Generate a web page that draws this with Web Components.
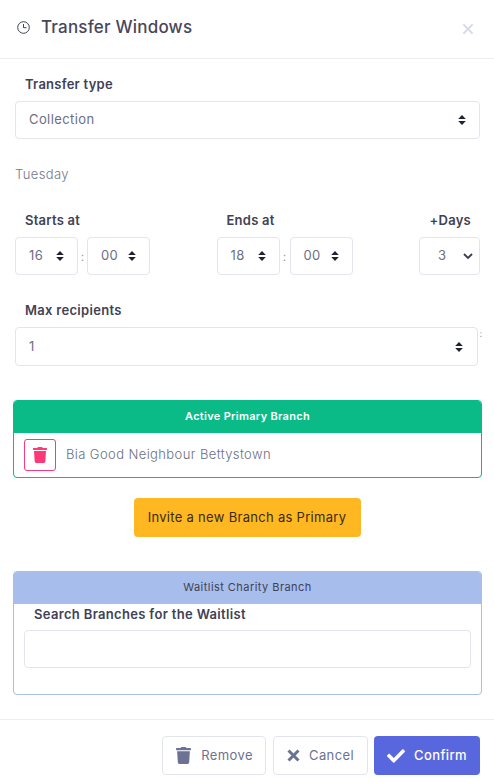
<!DOCTYPE html>
<html>
<head>
<meta charset="utf-8">
<style>
html, body { margin: 0; height: 782px; overflow: hidden; background: #fff; }
body { font-family: Inter, "Liberation Sans", sans-serif; font-size: 13px; color: #6b6f82; }
</style>
</head>
<body>
<transfer-dialog></transfer-dialog>

<script>
const ICONS = {
    trash: '<svg viewBox="0 0 448 512"><path fill="currentColor" d="M432 32H312l-9.4-18.7A24 24 0 0 0 281.1 0H166.8a23.72 23.72 0 0 0-21.4 13.3L136 32H16A16 16 0 0 0 0 48v32a16 16 0 0 0 16 16h416a16 16 0 0 0 16-16V48a16 16 0 0 0-16-16zM53.2 467a48 48 0 0 0 47.9 45h245.8a48 48 0 0 0 47.9-45L416 128H32z"/></svg>',
    check: '<svg viewBox="0 0 512 512"><path fill="currentColor" d="M173.898 439.404l-166.4-166.4c-9.997-9.997-9.997-26.206 0-36.204l36.203-36.204c9.997-9.998 26.207-9.998 36.204 0L192 312.69 432.095 72.596c9.997-9.997 26.207-9.997 36.204 0l36.203 36.204c9.997 9.997 9.997 26.206 0 36.204l-294.4 294.401c-9.998 9.997-26.207 9.997-36.204-.001z"/></svg>',
    times: '<svg viewBox="0 0 12 12"><path fill="none" stroke="currentColor" stroke-width="2.8" d="M1.4 1.4l9.2 9.2M10.6 1.4l-9.2 9.2"/></svg>',
    updown: '<svg viewBox="0 0 8 10"><path fill="#1f2233" d="M4 0l3.8 4H.2zM4 10L.2 6h7.6z"/></svg>',
    chevron: '<svg viewBox="0 0 10 7"><path fill="none" stroke="#3a3d4d" stroke-width="1.9" d="M1 1l4 4 4-4"/></svg>'
};

class FieldLabel extends HTMLElement {
    constructor() {
        super();
        this.attachShadow({mode: 'open'}).innerHTML = `
            <style>
                :host { display: block; font-size: 13px; line-height: 18px; font-weight: 600; color: #3f4254; letter-spacing: var(--label-spacing, .25px); }
            </style>
            <slot></slot>`;
    }
}

class SelectBox extends HTMLElement {
    constructor() {
        super();
        let shadow = this.attachShadow({mode: 'open'});
        let chevron = this.hasAttribute('data-chevron');
        shadow.innerHTML = `
            <style>
                :host {
                    display: flex; align-items: center; justify-content: space-between;
                    box-sizing: border-box; height: 38px;
                    padding: 0 var(--pad-right, 13px) 0 var(--pad-left, 13px);
                    border: 1px solid #e2e5ec; border-radius: 4px;
                    background: #fff; color: #6b6f82; font-size: 13px; letter-spacing: .4px;
                }
                span { padding-bottom: 2px; }
                svg { display: block; width: ${chevron ? 10 : 8}px; height: ${chevron ? 7 : 10}px; }
            </style>
            <span><slot></slot></span>
            ${chevron ? ICONS.chevron : ICONS.updown}`;
    }
}

class TimeField extends HTMLElement {
    constructor() {
        super();
        let hour = this.getAttribute('data-hour');
        let minute = this.getAttribute('data-minute');
        this.attachShadow({mode: 'open'}).innerHTML = `
            <style>
                :host { display: block; }
                field-label { padding-left: 10px; margin-bottom: 8px; }
                .row { display: flex; align-items: center; }
                select-box { width: 63px; }
                .c { width: var(--colon, 9px); text-align: center; color: #9a9db0; font-size: 12px; }
            </style>
            <field-label><slot></slot></field-label>
            <div class="row">
                <select-box>${hour}</select-box>
                <span class="c">:</span>
                <select-box>${minute}</select-box>
            </div>`;
    }
}

class BranchPanel extends HTMLElement {
    constructor() {
        super();
        let tone = this.getAttribute('data-tone');
        let green = tone === 'green';
        this.attachShadow({mode: 'open'}).innerHTML = `
            <style>
                :host {
                    display: block; margin: 0 12px 0 13px;
                    border: 1px solid ${green ? '#0abb87' : '#a7bdeb'}; border-radius: 4px;
                    overflow: hidden;
                }
                .head {
                    box-sizing: border-box; height: 32px; padding-bottom: 3px;
                    display: flex; align-items: center; justify-content: center;
                    background: ${green ? '#0abb87' : '#a7bdeb'};
                    color: ${green ? '#fff' : '#3f4254'};
                    font-size: 11px; font-weight: ${green ? 600 : 400};
                    letter-spacing: ${green ? .3 : .45}px;
                }
            </style>
            <div class="head">${this.getAttribute('data-title')}</div>
            <slot></slot>`;
    }
}

class ActionButton extends HTMLElement {
    constructor() {
        super();
        let kind = this.getAttribute('data-kind');
        let icon = this.getAttribute('data-icon');
        let size = this.getAttribute('data-size') || 16;
        this.attachShadow({mode: 'open'}).innerHTML = `
            <style>
                :host {
                    display: flex; align-items: center; justify-content: center; gap: var(--gap, 9px);
                    box-sizing: border-box; height: 39px; border-radius: 4px;
                    font-size: 13px; letter-spacing: .4px;
                    ${kind === 'primary' ? 'background:#5867dd;color:#fff;font-weight:500;' : 'border:1px solid #e2e5ec;color:#6c7293;background:#fff;'}
                }
                span { padding-bottom: 1px; }
                svg { display: block; width: ${size}px; height: ${size}px; }
            </style>
            ${ICONS[icon]}
            <span><slot></slot></span>`;
    }
}

class TransferDialog extends HTMLElement {
    constructor() {
        super();
        this.attachShadow({mode: 'open'}).innerHTML = `
            <style>
                :host { display: block; width: 494px; height: 782px; }
                header {
                    box-sizing: border-box; height: 59px; border-bottom: 1px solid #ebedf2;
                    display: flex; align-items: center; padding: 0 20px 4px 17px;
                }
                header svg.clock { width: 13px; height: 13px; margin-right: 11px; color: #3f4254; }
                h1 { flex: 1; margin: 0; font-size: 17px; line-height: 24px; font-weight: 500; color: #48465b; letter-spacing: .2px; }
                .close { width: 12px; height: 12px; margin-top: 4px; color: #d5d9e8; }
                .close svg { display: block; width: 12px; height: 12px; }
                .close path { stroke-width: 2; }
                .body { padding: 16px 14px 0 15px; }
                .type field-label { padding-left: 10px; margin-bottom: 8px; }
                .day { margin-top: 26px; line-height: 18px; font-size: 13px; font-weight: 300; color: #74788d; letter-spacing: .4px; }
                .times { display: flex; justify-content: space-between; margin-top: 28px; }
                .times time-field:nth-child(2) { --colon: 10px; }
                .days { width: 61px; }
                .days field-label { text-align: right; padding-right: 9px; margin-bottom: 8px; }
                .days select-box { --pad-left: 18px; --pad-right: 6px; }
                .max { margin-top: 26px; margin-right: 2px; position: relative; --label-spacing: .3px; }
                .max field-label { padding-left: 10px; margin-bottom: 8px; }
                .max select-box { height: 39px; --pad-left: 13px; --pad-right: 14px; }
                .stray { position: absolute; right: -4px; top: 27px; font-size: 9px; color: #9a9db0; }
                .primary { margin-top: 34px; height: 78px; box-sizing: border-box; }
                .row { display: flex; align-items: center; padding: 6px 10px; gap: 10px; font-size: 13px; font-weight: 300; color: #6b6f82; letter-spacing: .4px; }
                .row span { padding-bottom: 2px; }
                .del { box-sizing: border-box; width: 32px; height: 32px; border: 1px solid #fd397a; border-radius: 3px; color: #fd397a; display: flex; align-items: center; justify-content: center; }
                .del svg { width: 14px; height: 16px; display: block; }
                .invite-wrap { display: flex; justify-content: center; margin-top: 20px; }
                .invite { box-sizing: border-box; width: 227px; height: 39px; padding-bottom: 2px; background: #ffb822; border-radius: 4px; color: #3a2b12; font-size: 13px; display: flex; align-items: center; justify-content: center; letter-spacing: .3px; }
                .wait { margin-top: 34px; height: 124px; box-sizing: border-box; }
                .search { padding: 0 10px; --label-spacing: .33px; }
                .search field-label { padding: 1px 0 0 10px; margin-bottom: 7px; }
                .search .input { height: 38px; box-sizing: border-box; border: 1px solid #e2e5ec; border-radius: 4px; }
                footer {
                    margin-top: 24px; border-top: 1px solid #ebedf2; padding: 16px 14px 0 0;
                    display: flex; justify-content: flex-end; gap: 6px;
                }
                .b-remove { width: 104px; margin-right: 1px; --gap: 9px; }
                .b-cancel { width: 95px; --gap: 9px; }
                .b-confirm { width: 106px; }
            </style>
            <header>
                <svg class="clock" viewBox="0 0 13 13"><circle cx="6.5" cy="6.5" r="5.8" fill="none" stroke="currentColor" stroke-width="1"/><path fill="none" stroke="currentColor" d="M6.5 3v3.7h3"/></svg>
                <h1>Transfer Windows</h1>
                <div class="close">${ICONS.times}</div>
            </header>
            <div class="body">
                <div class="type">
                    <field-label>Transfer type</field-label>
                    <select-box>Collection</select-box>
                </div>
                <div class="day">Tuesday</div>
                <div class="times">
                    <time-field data-hour="16" data-minute="00">Starts at</time-field>
                    <time-field data-hour="18" data-minute="00">Ends at</time-field>
                    <div class="days">
                        <field-label>+Days</field-label>
                        <select-box data-chevron>3</select-box>
                    </div>
                </div>
                <div class="max">
                    <field-label>Max recipients</field-label>
                    <select-box>1</select-box>
                    <span class="stray">:</span>
                </div>
            </div>
            <branch-panel class="primary" data-tone="green" data-title="Active Primary Branch">
                <div class="row">
                    <div class="del">${ICONS.trash}</div>
                    <span>Bia Good Neighbour Bettystown</span>
                </div>
            </branch-panel>
            <div class="invite-wrap"><div class="invite">Invite a new Branch as Primary</div></div>
            <branch-panel class="wait" data-tone="blue" data-title="Waitlist Charity Branch">
                <div class="search">
                    <field-label>Search Branches for the Waitlist</field-label>
                    <div class="input"></div>
                </div>
            </branch-panel>
            <footer>
                <action-button class="b-remove" data-icon="trash" data-size="17">Remove</action-button>
                <action-button class="b-cancel" data-icon="times" data-size="13">Cancel</action-button>
                <action-button class="b-confirm" data-kind="primary" data-icon="check" data-size="18">Confirm</action-button>
            </footer>`;
    }
}

customElements.define('field-label', FieldLabel);
customElements.define('select-box', SelectBox);
customElements.define('time-field', TimeField);
customElements.define('branch-panel', BranchPanel);
customElements.define('action-button', ActionButton);
customElements.define('transfer-dialog', TransferDialog);
</script>
</body>
</html>
